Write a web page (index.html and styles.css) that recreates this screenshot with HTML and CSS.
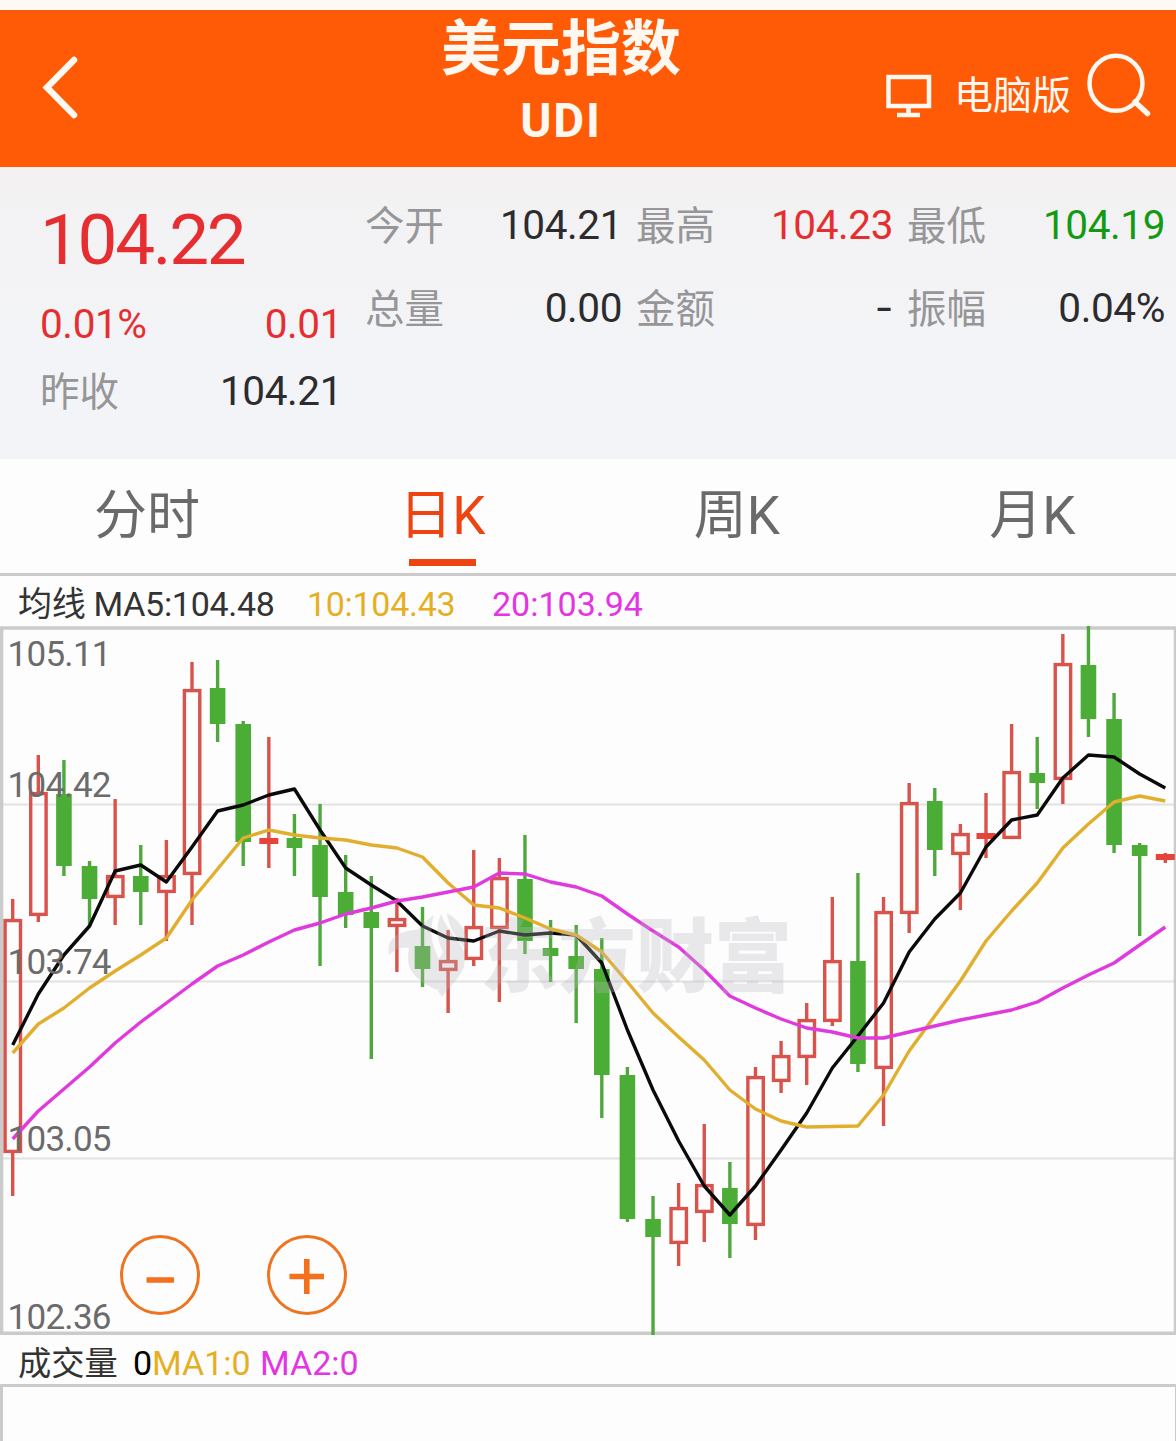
FILE: index.html
```html
<!DOCTYPE html>
<html lang="zh-CN">
<head>
  <meta charset="UTF-8">
  <meta name="viewport" content="width=device-width,initial-scale=1">
  <title>美元指数 UDI</title>
  <link rel="stylesheet" href="styles.css">
</head>
<body>
  <header class="header">
    <a class="back">
      <svg width="44" height="70" viewBox="38 54 44 70"><path d="M74 61 L47 88.5 L74 116"/></svg>
    </a>
    <div class="title">
      <h1>美元指数</h1>
      <h2>UDI</h2>
    </div>
    <div class="tools">
      <svg class="pc-icon" width="46" height="44" viewBox="886 74 46 44">
        <path d="M888.5 77 H929 V106 H888.5 Z M908.5 106 V114 M897 115 H920"/>
      </svg>
      <span class="pc-text">电脑版</span>
      <svg class="search-icon" width="66" height="66" viewBox="1086 52 66 66">
        <ellipse cx="1116" cy="83.3" rx="26.5" ry="27.5"/><path d="M1135 102 L1147.5 113.5"/>
      </svg>
    </div>
  </header>

  <section class="quote">
    <div class="now">
      <div class="price red">104.22</div>
      <div class="line change red"><span>0.01%</span><span>0.01</span></div>
      <div class="line"><label>昨收</label><span>104.21</span></div>
    </div>
    <div class="detail">
      <div class="line"><label>今开</label><span>104.21</span></div>
      <div class="line"><label>最高</label><span class="red">104.23</span></div>
      <div class="line"><label>最低</label><span class="green">104.19</span></div>
      <div class="line"><label>总量</label><span>0.00</span></div>
      <div class="line"><label>金额</label><span class="dash">-</span></div>
      <div class="line"><label>振幅</label><span>0.04%</span></div>
    </div>
  </section>

  <nav class="tabs">
    <a>分时</a>
    <a class="active">日K</a>
    <a>周K</a>
    <a>月K</a>
  </nav>

  <div class="info ma-info">
    <span class="ma5">均线 MA5:104.48</span>
    <span class="ma10">10:104.43</span>
    <span class="ma20">20:103.94</span>
  </div>

  <div class="chart">
    <svg id="kline" width="1176" height="709" viewBox="0 626 1176 709"></svg>
  </div>

  <div class="info vol-info">
    <span class="vol">成交量</span>
    <span class="vol-num">0</span>
    <span class="ma10">MA1:0</span>
    <span class="ma20">MA2:0</span>
  </div>
  <div class="volume"></div>

  <script src="chart.js"></script>
</body>
</html>
```
FILE: styles.css
```css
* { box-sizing: border-box; }
body { margin: 0; width: 1176px; height: 1441px; overflow: hidden; background: #fdfdfd; font-family: Roboto, "Noto Sans CJK SC", sans-serif; color: #2c2c2e; display: flex; flex-direction: column; }
svg { display: block; flex: none; }
h1, h2 { margin: 0; font-weight: bold; }

.header { height: 167px; flex: none; border-top: 10px solid #fdf9f4; background: #ff5a06; color: #fff8f0; display: grid; grid-template-columns: 382px 358px 1fr; }
.back { padding: 43px 0 0 38px; }
.back path { fill: none; stroke: #fff8f0; stroke-width: 6.5; stroke-linecap: round; }
.title { text-align: center; }
.title h1 { font-size: 60px; line-height: 80px; }
.title h2 { font-size: 47.5px; line-height: 62px; letter-spacing: 1.8px; }
.tools { display: flex; align-items: flex-start; padding-left: 146px; }
.tools path, .tools ellipse { fill: none; stroke: #fff8f0; stroke-width: 4.5; }
.pc-icon { margin-top: 64px; }
.pc-text { font-size: 39px; line-height: 58px; margin: 57px 0 0 22px; width: 118px; white-space: nowrap; }
.search-icon { margin: 42px 0 0 14px; }
.search-icon path { stroke-width: 5.5; stroke-linecap: round; }

.quote { height: 292px; flex: none; background: linear-gradient(#f3f1f2, #f3f4f7 60%); display: flex; font-size: 40.5px; }
.now { width: 342px; padding: 28px 0 0 40px; }
.price { font-size: 71px; line-height: 90px; letter-spacing: -2.3px; }
.line { display: flex; justify-content: space-between; line-height: 60px; white-space: nowrap; letter-spacing: -0.4px; }
.change { margin: 9px 0 7px; }
.detail { width: 801px; margin-left: 23px; padding-top: 28px; display: grid; grid-template-columns: 257px 257px 258px; column-gap: 14px; grid-auto-rows: 83px; }
.line label { color: #969698; font-size: 39.5px; letter-spacing: 0; padding-top: 3px; line-height: 58px; }
.dash { font-family: Inter, sans-serif; }
.red { color: #e62e30; }
.green { color: #129a12; }

.tabs { height: 117px; flex: none; border-bottom: 3px solid #cbcbcb; display: grid; grid-template-columns: repeat(4, 294px); font-size: 53px; color: #6a6a6a; }
.tabs a { display: flex; flex-direction: column; align-items: center; line-height: 92px; padding-top: 11px; }
.tabs a:nth-child(3) { padding-left: 4px; }
.tabs a:nth-child(4) { padding-left: 7px; }
.tabs .active { padding-left: 3px; color: #ee4411; }
.tabs .active::after { content: ""; width: 67px; height: 7px; margin-top: -3px; background: #ee4411; }

.info { flex: none; display: flex; font-size: 34px; line-height: 50px; white-space: nowrap; }
.ma-info { height: 50px; padding: 5px 0 0 18px; line-height: 46px; }
.ma-info .ma5 { width: 289px; letter-spacing: -0.3px; }
.ma-info .ma10 { width: 185px; letter-spacing: -0.3px; }
.ma5 { color: #333; }
.ma10 { color: #e6af23; }
.ma20 { color: #e335e3; }

.chart { height: 709px; flex: none; }
.chart svg { overflow: visible; }
.frame { fill: none; stroke: #cbcbcb; stroke-width: 3.5; }
.grid { stroke: #e2e2e2; stroke-width: 2; }
.up { stroke: #d8534b; stroke-width: 3.4; fill: none; }
.flat { fill: #e6443a; }
.down { stroke: #4fa83c; stroke-width: 3.4; fill: none; }
.down-body { fill: #4bad35; }
.avg { fill: none; stroke-width: 3.4; stroke-linejoin: round; }
.avg5 { stroke: #0a0a0a; }
.avg10 { stroke: #e2ae2e; }
.avg20 { stroke: #e03ade; }
.axis { font-size: 35px; fill: #6b6b6b; }
.mark { fill: #b9b9c0; opacity: 0.3; }
.mark text { font-size: 80px; font-weight: 900; }
.zoom { fill: none; stroke: #ee7420; stroke-width: 3; }
.zoom-sign { stroke: #f4701c; stroke-width: 5.6; }

.vol-info { height: 49px; padding: 4px 0 0 18px; line-height: 48px; }
.vol { width: 115px; font-size: 33.3px; line-height: 50px; color: #333; }
.vol-num { width: 19px; color: #000; }
.vol-info .ma10 { width: 108px; }
.volume { flex: 1; border: solid #cbcbcb; border-width: 3px 1px 0 3px; }
```
FILE: chart.js
```js
// 每根K线：[方向, 最高, 实体上沿, 实体下沿, 最低]，u 涨 d 跌 f 平
const candles = [
  ['u', 899, 919, 1153, 1196], ['u', 755, 792, 916, 922], ['d', 760, 794, 866, 876], ['d', 861, 866, 899, 927],
  ['u', 799, 875, 898, 925], ['d', 845, 876, 892, 925], ['u', 840, 875, 893, 941], ['u', 662, 689, 875, 925],
  ['d', 660, 688, 724, 742], ['d', 721, 724, 842, 866], ['f', 737, 838, 844, 868], ['d', 814, 838, 848, 876],
  ['d', 804, 845, 897, 966], ['d', 855, 892, 915, 928], ['d', 876, 912, 928, 1059], ['u', 898, 918, 927, 972],
  ['d', 907, 946, 969, 987], ['u', 930, 960, 971, 1013], ['u', 850, 926, 960, 966], ['u', 858, 877, 929, 1002],
  ['d', 835, 879, 941, 954], ['d', 920, 948, 956, 982], ['d', 925, 956, 969, 1023], ['d', 938, 969, 1075, 1118],
  ['d', 1067, 1075, 1219, 1222], ['d', 1196, 1219, 1237, 1335], ['u', 1183, 1207, 1244, 1266], ['u', 1124, 1184, 1213, 1242],
  ['d', 1162, 1188, 1224, 1258], ['u', 1067, 1076, 1226, 1240], ['u', 1041, 1055, 1082, 1093], ['u', 1003, 1019, 1058, 1085],
  ['u', 897, 960, 1022, 1026], ['d', 873, 961, 1064, 1072], ['u', 897, 911, 1069, 1126], ['u', 783, 802, 914, 933],
  ['d', 788, 801, 850, 876], ['u', 824, 833, 855, 910], ['f', 793, 833, 839, 858], ['u', 724, 771, 839, 839],
  ['d', 737, 773, 783, 809], ['u', 634, 663, 780, 804], ['d', 626, 665, 719, 737], ['d', 693, 719, 845, 853],
  ['d', 843, 845, 856, 936], ['f', 853, 854, 860, 863]
];
const ma5 = [1045, 994, 955, 926, 871, 865, 882, 847, 811, 805, 795, 789, 830, 868, 885, 901, 926, 938, 941, 931, 935, 933, 935, 963, 1030, 1090, 1141, 1186, 1215, 1186, 1150, 1113, 1068, 1036, 1003, 952, 919, 893, 847, 820, 815, 778, 755, 757, 774, 788];
const ma10 = [1053, 1024, 1008, 988, 971, 955, 938, 900, 869, 838, 830, 835, 838, 840, 845, 848, 857, 883, 905, 908, 918, 929, 935, 952, 982, 1013, 1037, 1060, 1090, 1109, 1121, 1127, 1126.5, 1126, 1095, 1051, 1016, 981, 941, 911, 883, 848, 824, 802, 796, 801];
const ma20 = [1139, 1111, 1089, 1067, 1043, 1022, 1003, 984, 966, 955, 942, 930, 923, 914, 908, 901, 897, 892, 887, 873, 874, 882, 887, 896, 914, 931, 947, 970, 996, 1008, 1019, 1028, 1032, 1038, 1038, 1032, 1026, 1020, 1015, 1010, 1002, 988, 975, 963, 945, 927];

const px = i => 12.7 + i * 25.613;
let out = '<path class="grid" d="M3 804.5H1175M3 981.5H1175M3 1158.5H1175"/>';
out += '<path class="frame" d="M0 628H1176M0 1333.3H1176M1.6 628V1333M1175.5 628V1333"/>';

candles.forEach(([type, high, top, bottom, low], i) => {
  const x = px(i);
  if (type === 'd') {
    out += `<path class="down" d="M${x} ${high}V${low}"/><rect class="down-body" x="${x - 7.8}" y="${top}" width="15.6" height="${bottom - top}"/>`;
  } else if (type === 'f') {
    out += `<path class="up" d="M${x} ${high}V${low}"/><rect class="flat" x="${x - 9.5}" y="${top}" width="19" height="${bottom - top}"/>`;
  } else {
    out += `<path class="up" d="M${x} ${high}V${top}M${x} ${bottom}V${low}"/><rect class="up" x="${x - 7.6}" y="${top + 1.6}" width="15.4" height="${bottom - top - 3.2}"/>`;
  }
});

const line = (data, name) => `<polyline class="avg ${name}" points="${data.map((y, i) => px(i) + ',' + y).join(' ')}"/>`;
out += line(ma5, 'avg5') + line(ma10, 'avg10') + line(ma20, 'avg20');

// 水印
out += `<g class="mark">
  <path d="M389 955C386 940 396 930 424 929C416 934 412 940 410 948C402 946 395 949 389 955Z"/>
  <path d="M409 966C405 944 416 928 434 915C428 933 432 952 446 969C441 978 438 984 437 990C421 984 412 974 409 966Z"/>
  <path d="M442 997C430 980 434 966 443 952C436 938 436 926 441 914C446 930 459 938 464 952C469 971 454 981 442 997Z"/>
  <path d="M447 913C462 922 470 936 466 950C460 940 450 934 447 913Z"/>
  <text x="480" y="985" textLength="312" lengthAdjust="spacingAndGlyphs">东方财富</text>
</g>`;

[[105.11, 666], [104.42, 797], [103.74, 974], [103.05, 1151], [102.36, 1329]].forEach(([price, y]) => {
  out += `<text class="axis" x="7.5" y="${y}" textLength="104">${price}</text>`;
});

// 缩放按钮
out += '<circle class="zoom" cx="160" cy="1275" r="38.5"/><circle class="zoom" cx="307" cy="1275" r="38.5"/>';
out += '<path class="zoom-sign" d="M146.5 1280H174M289.5 1276.5H324M306.8 1259V1294"/>';

document.getElementById('kline').innerHTML = out;
```
